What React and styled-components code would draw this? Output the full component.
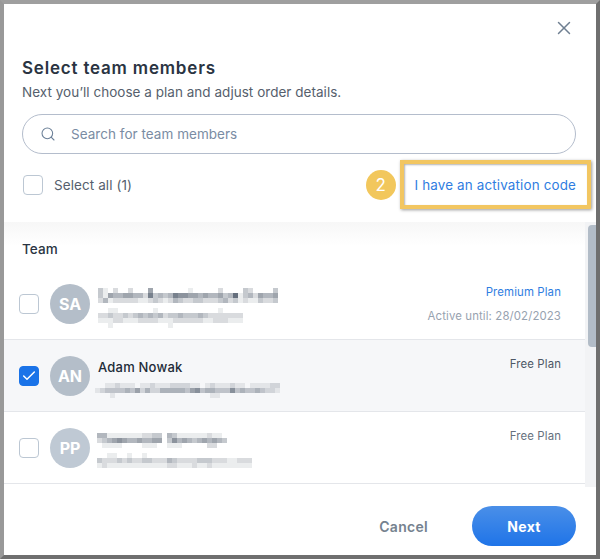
import React from "react";
import styled, { createGlobalStyle } from "styled-components";
import { Search, X, Check } from "lucide-react";

const GlobalStyle = createGlobalStyle`
  html, body {
    margin: 0;
    background: #fff;
  }
  * {
    box-sizing: border-box;
  }
  body {
    font-family: "Inter", "Noto Sans", sans-serif;
    color: #222b38;
  }
`;

const Frame = styled.div`
  width: 600px;
  height: 559px;
  display: flex;
  flex-direction: column;
  background: #fff;
  border-style: solid;
  border-width: 4px;
  border-color: #9f9f9f #6f6f6f #6f6f6f #999;
  overflow: hidden;
`;

const Header = styled.header`
  height: 218px;
  padding: 0 20px 0 18px;
  display: flex;
  flex-direction: column;
`;

const CloseButton = styled.button`
  align-self: flex-end;
  margin: 12px 0 0;
  padding: 0;
  width: 24px;
  height: 24px;
  display: flex;
  align-items: center;
  justify-content: center;
  border: 0;
  background: none;
  color: #6f7f91;
`;

const Title = styled.h1`
  margin: 16px 0 0;
  font-size: 17px;
  line-height: 24px;
  font-weight: 600;
  letter-spacing: 0.8px;
  color: #2a3442;
`;

const Subtitle = styled.p`
  margin: 3px 0 0;
  font-size: 13.5px;
  line-height: 18px;
  letter-spacing: 0.03px;
  color: #565f6d;
`;

const SearchBox = styled.label`
  margin-top: 13px;
  height: 40px;
  display: flex;
  align-items: center;
  gap: 13px;
  padding-left: 17px;
  border: 1px solid #b4bdcc;
  border-radius: 20px;
  color: #6c8098;
`;

const SearchInput = styled.input`
  flex: 1;
  border: 0;
  outline: 0;
  background: none;
  font: 13.5px "Inter", sans-serif;
  letter-spacing: 0.03px;

  &::placeholder {
    color: #7a8ca3;
    opacity: 1;
  }
`;

const SelectRow = styled.div`
  margin-top: 16px;
  height: 30px;
  display: flex;
  align-items: center;
  padding-left: 1px;
`;

const Box = styled.span`
  flex: none;
  width: 20px;
  height: 20px;
  display: flex;
  align-items: center;
  justify-content: center;
  border-radius: 4px;
  border: 1px solid ${(props) => (props.$checked ? "#1a73e8" : "#bcc7d3")};
  background: ${(props) => (props.$checked ? "#1a73e8" : "#fff")};
  color: #fff;
`;

const SelectLabel = styled.span`
  margin-left: 11px;
  font-size: 13.5px;
  letter-spacing: 0.08px;
  color: #565f6d;
`;

const Badge = styled.span`
  margin-left: auto;
  width: 30px;
  height: 30px;
  display: flex;
  align-items: center;
  justify-content: center;
  border-radius: 50%;
  background: #f2c75c;
  color: #fff;
  font-size: 17px;
`;

const ActivationLink = styled.a`
  position: relative;
  margin-left: 19px;
  font-size: 13.4px;
  letter-spacing: 0.16px;
  color: #2f7de1;

  &::after {
    content: "";
    position: absolute;
    left: -15px;
    right: -15px;
    top: -17px;
    bottom: -16px;
    border: 4px solid #f2c661;
    box-shadow: 1px 1px 3px rgba(0, 0, 0, 0.4), inset 1px 1px 2px rgba(0, 0, 0, 0.3);
  }
`;

const ListArea = styled.div`
  height: 265px;
  display: flex;
`;

const List = styled.div`
  flex: 1;
  min-width: 0;
`;

const GroupLabel = styled.div`
  height: 46px;
  padding: 19px 0 0 18px;
  font-size: 13.5px;
  line-height: 16px;
  font-weight: 500;
  letter-spacing: 0.1px;
  color: #2a3442;
  background: linear-gradient(#f7f7f7, #fff 24px);
`;

const Row = styled.div`
  height: 72px;
  display: flex;
  align-items: flex-start;
  padding: 16px 24px 0 15px;
  border-bottom: 1px solid #e4e6ea;
  background: ${(props) => (props.$selected ? "#f6f7f9" : "#fff")};
`;

const RowCheck = styled.div`
  margin-top: 10px;
`;

const Avatar = styled.div`
  flex: none;
  width: 40px;
  height: 40px;
  margin: 0 8px 0 11px;
  display: flex;
  align-items: center;
  justify-content: center;
  border-radius: 50%;
  background: ${(props) => props.$color};
  color: #fff;
  font-size: 16px;
  font-weight: 700;
`;

const Person = styled.div`
  flex: 1;
  display: flex;
  flex-direction: column;
  padding-top: ${(props) => props.$top}px;
  gap: ${(props) => props.$gap}px;
`;

const Name = styled.div`
  font-size: 13px;
  line-height: 16px;
  font-weight: 500;
  letter-spacing: 0.2px;
  color: #222b38;
`;

const Pixels = styled.svg`
  display: block;
  margin-left: ${(props) => props.$shift}px;
`;

const PlanColumn = styled.div`
  display: flex;
  flex-direction: column;
  align-items: flex-end;
  gap: 8px;
`;

const PlanLine = styled.div`
  font-size: 11.4px;
  line-height: 16px;
  letter-spacing: 0.12px;
  color: ${(props) => props.$color};
`;

const Track = styled.div`
  flex: none;
  width: 11px;
  padding: 3px 0 0 3px;
  background: #f2f3f5;
`;

const Thumb = styled.div`
  height: 122px;
  border-radius: 4px 0 0 4px;
  background: #b2bcc7;
`;

const Footer = styled.footer`
  flex: 1;
  display: flex;
  align-items: flex-start;
  justify-content: flex-end;
  padding: 19px 20px 0 0;
`;

const CancelButton = styled.button`
  border: 0;
  background: none;
  padding: 0;
  height: 40px;
  margin-right: 44px;
  font: 600 14px "Inter", sans-serif;
  letter-spacing: 0.3px;
  color: #75828f;
`;

const NextButton = styled.button`
  width: 104px;
  height: 40px;
  border: 0;
  border-radius: 20px;
  background: linear-gradient(#4a8fe8, #1f74e8);
  color: #fff;
  font: 700 14px "Inter", sans-serif;
  letter-spacing: 0.3px;
`;

// pixelated stand-in for the redacted names and emails, one digit per 5px cell
const Mosaic = ({ rows, shift = 0 }) => {
  const cols = Math.max(...rows.map((r) => r.length));
  return (
    <Pixels $shift={shift} width={cols * 5} height={rows.length * 5} shapeRendering="crispEdges">
      {rows.flatMap((row, y) =>
        [...row].map((d, x) =>
          d === "0" ? null : (
            <rect
              key={`${x}-${y}`}
              x={x * 5}
              y={y * 5}
              width="5"
              height="5"
              fill="#3f4b5c"
              opacity={Number(d) / 10}
            />
          )
        )
      )}
    </Pixels>
  );
};

const members = [
  {
    initials: "SA",
    color: "#b4bec9",
    top: 4,
    gap: 5,
    nameRows: [
      "310200200050000000100000200003200003",
      "315445544273434766554544534813425445",
      "241222221123212432233222342312113223",
    ],
    mailRows: [
      "00110000000100000000000010000",
      "22322323434342334333432222222",
      "11122111222211122222211222111",
      "00100000000000100000000000000",
    ],
    plans: [
      { text: "Premium Plan", color: "#2f7de1" },
      { text: "Active until: 28/02/2023", color: "#97a2af" },
    ],
  },
  {
    initials: "AN",
    color: "#b4bec9",
    selected: true,
    name: "Adam Nowak",
    top: 3,
    gap: 8,
    mailShift: -3,
    mailRows: [
      "0011211101121112222110121112110111122",
      "1233334352422444443563443336343343221",
      "0001000000000000000000011000000000000",
    ],
    plans: [{ text: "Free Plan", color: "#4d5766" }],
  },
  {
    initials: "PP",
    color: "#bfc9d4",
    top: 5,
    gap: 5,
    shift: -1,
    nameRows: [
      "441111111223304311111121100",
      "234565445445503645434545430",
      "011110000111001110000022000",
    ],
    mailRows: [
      "0011001001000000000000000000000",
      "3222323223322243222233322211222",
      "1211111111111122111211211111111",
    ],
    plans: [{ text: "Free Plan", color: "#66707d" }],
  },
];

const App = () => {
  return (
    <Frame>
      <GlobalStyle />
      <Header>
        <CloseButton aria-label="Close">
          <X size={22} strokeWidth={1.6} />
        </CloseButton>
        <Title>Select team members</Title>
        <Subtitle>Next you’ll choose a plan and adjust order details.</Subtitle>
        <SearchBox>
          <Search size={16} strokeWidth={1.6} />
          <SearchInput placeholder="Search for team members" />
        </SearchBox>
        <SelectRow>
          <Box />
          <SelectLabel>Select all (1)</SelectLabel>
          <Badge>2</Badge>
          <ActivationLink>I have an activation code</ActivationLink>
        </SelectRow>
      </Header>
      <ListArea>
        <List>
          <GroupLabel>Team</GroupLabel>
          {members.map((m) => (
            <Row key={m.initials} $selected={m.selected}>
              <RowCheck>
                <Box $checked={m.selected}>{m.selected && <Check size={16} strokeWidth={2.2} />}</Box>
              </RowCheck>
              <Avatar $color={m.color}>{m.initials}</Avatar>
              <Person $top={m.top} $gap={m.gap}>
                {m.name ? <Name>{m.name}</Name> : <Mosaic rows={m.nameRows} shift={m.shift} />}
                <Mosaic rows={m.mailRows} shift={m.mailShift ?? m.shift} />
              </Person>
              <PlanColumn>
                {m.plans.map((p) => (
                  <PlanLine key={p.text} $color={p.color}>
                    {p.text}
                  </PlanLine>
                ))}
              </PlanColumn>
            </Row>
          ))}
        </List>
        <Track>
          <Thumb />
        </Track>
      </ListArea>
      <Footer>
        <CancelButton>Cancel</CancelButton>
        <NextButton>Next</NextButton>
      </Footer>
    </Frame>
  );
};

export default App;
